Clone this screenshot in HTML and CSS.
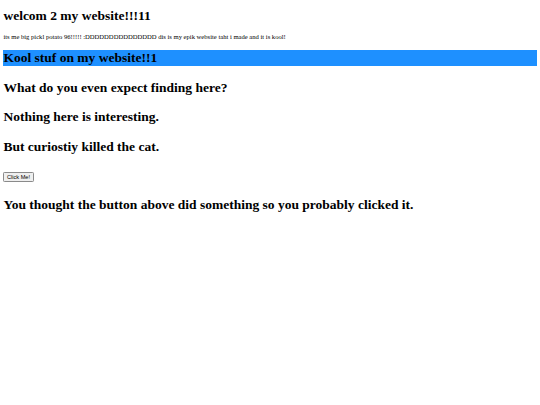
FILE: index.html
```html
<!DOCTYPE html>
<html>
<head>
<meta charset="utf-8">
<title>welcom 2 my website!!!11</title>
<link rel="stylesheet" href="styles.css">
</head>
<body class="page">
<h1 class="title first">welcom 2 my website!!!11</h1>
<p class="intro">its me big pickl potato 96!!!!! :DDDDDDDDDDDDDDD dis is my epik website taht i made and it is kool!</p>
<h1 class="title kool">Kool stuf on my website!!1</h1>
<h3 class="big">What do you even expect finding here?</h3>
<h3 class="big">Nothing here is interesting.</h3>
<h3 class="big">But curiostiy killed the cat.</h3>
<div class="actions"><button class="btn" type="button">Click Me!</button></div>
<h3 class="big after">You thought the button above did something so you probably clicked it.</h3>
</body>
</html>
```
FILE: styles.css
```css
html {
  background: #fff;
}
.page {
  margin: 0 3.4px 3.4px;
  font-family: "Liberation Serif", "Times New Roman", serif;
  font-size: 6.75px;
  color: #000;
}
.title {
  font-size: 13.5px;
  font-weight: bold;
  margin: 9px 0;
  line-height: normal;
}
.first {
  margin-top: 7.8px;
  margin-bottom: 9.6px;
}
.intro {
  margin: 6.75px 0;
  font-size: 6.6px;
  line-height: 7.8px;
}
.kool {
  background: #1e90ff;
}
.big {
  font-size: 13.5px;
  font-weight: bold;
  margin: 13.6px 0;
  line-height: normal;
}
.actions {
  margin: 16.6px 0 0;
  line-height: 10px;
}
.after {
  margin-top: 14.8px;
}
.btn {
  font-family: "Liberation Sans", Arial, sans-serif;
  font-size: 5.6px;
  line-height: normal;
  padding: 1.2px 2.6px;
  margin: 0;
  background: #efefef;
  color: #000;
  border: 0.6px solid #8a8a8a;
  border-radius: 1.3px;
  vertical-align: top;
}
```
